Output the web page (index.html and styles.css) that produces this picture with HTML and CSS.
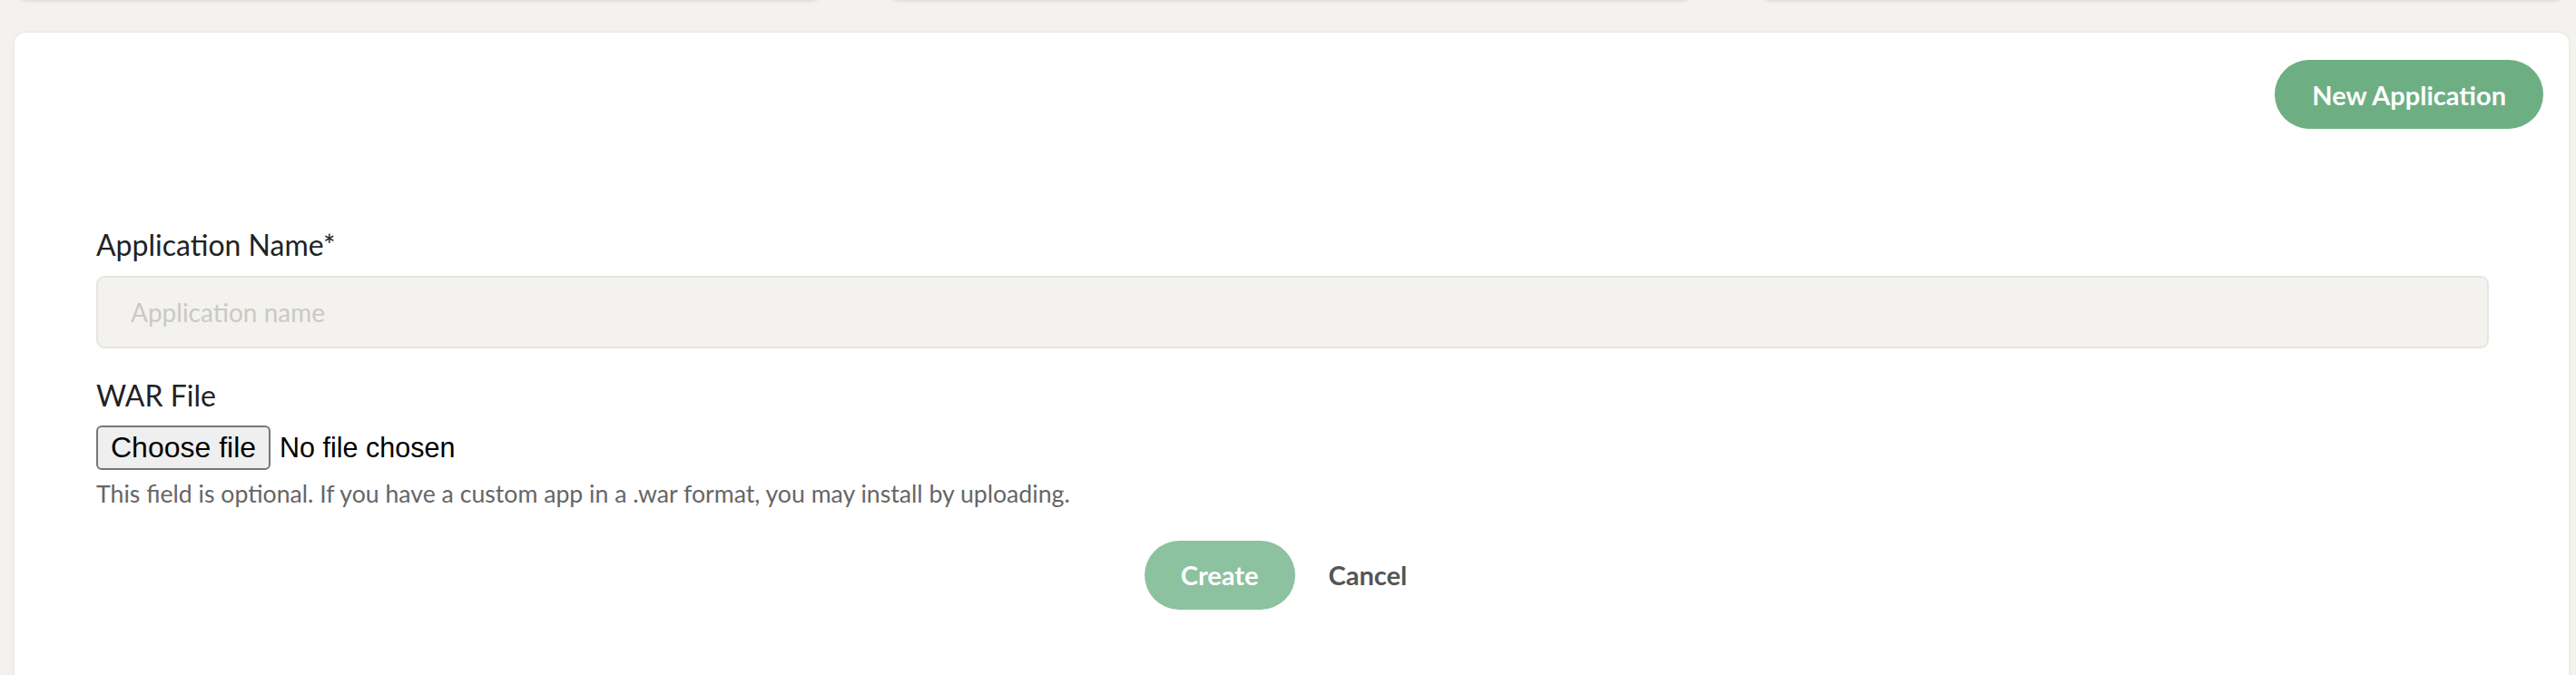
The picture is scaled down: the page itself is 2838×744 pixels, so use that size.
FILE: index.html
```html
<!DOCTYPE html>
<html lang="en">
<head>
<meta charset="utf-8">
<title>New Application</title>
<link rel="stylesheet" href="styles.css">
</head>
<body>
  <div class="top-row">
    <div class="top-card"></div>
    <div class="top-card"></div>
    <div class="top-card"></div>
  </div>
  <main class="card">
    <div class="toolbar">
      <button class="btn btn-primary" type="button">New Application</button>
    </div>
    <form class="form">
      <label class="label" for="appname">Application Name*</label>
      <input class="text-input" id="appname" type="text" placeholder="Application name">
      <div class="label label-war">WAR File</div>
      <div class="file-row">
        <span class="file-btn">Choose file</span>
        <span class="file-status">No file chosen</span>
      </div>
      <p class="help">This field is optional. If you have a custom app in a .war format, you may install by uploading.</p>
      <div class="actions">
        <button class="btn btn-create" type="button">Create</button>
        <button class="btn-link" type="button">Cancel</button>
      </div>
    </form>
  </main>
</body>
</html>
```

FILE: styles.css
```css
* { box-sizing: border-box; }

html, body {
  margin: 0;
  padding: 0;
  background: #f3f2ee;
  font-family: Lato, "Open Sans", sans-serif;
  color: #222222;
}

body {
  height: 744px;
  overflow: hidden;
}

.top-row {
  display: flex;
  gap: 76px;
  padding: 0 14px 0 20px;
  height: 0;
}

.top-card {
  flex: 1;
  height: 30px;
  margin-top: -30px;
  background: #ffffff;
  border-radius: 10px;
  box-shadow: 0 1px 4px rgba(0, 0, 0, 0.12);
}

.card {
  margin: 36px 8px 0 16px;
  background: #ffffff;
  border-radius: 12px;
  box-shadow: 0 0 4px rgba(0, 0, 0, 0.08);
  padding: 30px 28px 80px 28px;
  min-height: 760px;
}

.toolbar {
  display: flex;
  justify-content: flex-end;
}

.btn {
  border: none;
  font-family: Lato, sans-serif;
  font-weight: 700;
  font-size: 29px;
  color: #ffffff;
  height: 76px;
  border-radius: 38px;
  padding: 0 41px;
  cursor: pointer;
}

.btn-primary {
  background: #6daf83;
}

.form {
  margin: 109px 60px 0 62px;
  display: flex;
  flex-direction: column;
}

.label {
  font-size: 32px;
  line-height: 1.2;
  color: #222222;
}

.text-input {
  margin-top: 15px;
  height: 80px;
  width: 100%;
  background: #f3f2ee;
  border: 2px solid #e6e5e1;
  border-radius: 9px;
  padding: 0 36px;
  font-family: Lato, sans-serif;
  font-size: 28px;
  color: #222222;
  outline: none;
}

.text-input::placeholder {
  color: #cac9c5;
}

.label-war {
  margin-top: 33px;
}

.file-row {
  margin-top: 13px;
  display: flex;
  align-items: center;
  gap: 10px;
  font-family: "Liberation Sans", Arial, sans-serif;
}

.file-btn {
  display: inline-flex;
  align-items: center;
  height: 49px;
  padding: 0 14px;
  background: #efefef;
  border: 2px solid #767676;
  border-radius: 6px;
  font-size: 32px;
  color: #000000;
}

.file-status {
  font-size: 30.5px;
  color: #000000;
}

.help {
  margin: 10px 0 0 0;
  font-size: 26.67px;
  line-height: 1.2;
  color: #666666;
}

.actions {
  margin-top: 36px;
  display: flex;
  justify-content: center;
  align-items: center;
}

.btn-create {
  background: #8cc29f;
  padding: 0 40px;
}

.btn-link {
  background: none;
  border: none;
  padding: 0 37px;
  height: 76px;
  font-family: Lato, sans-serif;
  font-weight: 700;
  font-size: 29px;
  color: #555555;
  cursor: pointer;
}
```
